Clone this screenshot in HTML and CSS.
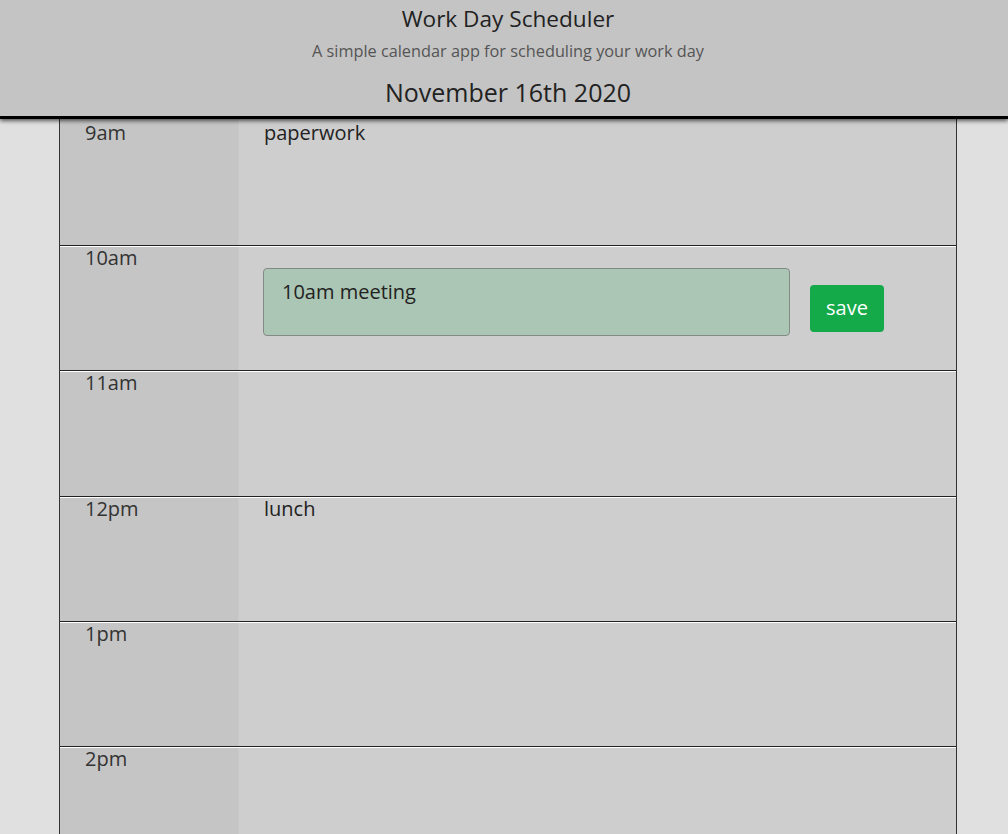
FILE: index.html
```html
<!DOCTYPE html>
<html>
<head>
<meta charset="utf-8">
<link rel="stylesheet" href="styles.css">
</head>
<body>
<header class="jumbotron">
  <div class="jumbo-inner">
    <h1 class="title">Work Day Scheduler</h1>
    <p class="lead">A simple calendar app for scheduling your work day</p>
    <p class="current-day">November 16th 2020</p>
  </div>
</header>
<main class="page">
  <div class="planner">
    <div class="row">
      <div class="hour">9am</div>
      <div class="slot"><textarea class="entry plain">paperwork</textarea></div>
    </div>
    <div class="row">
      <div class="hour">10am</div>
      <div class="slot"><textarea class="entry active">10am meeting</textarea><button class="save-btn">save</button></div>
    </div>
    <div class="row">
      <div class="hour">11am</div>
      <div class="slot"><textarea class="entry plain"></textarea></div>
    </div>
    <div class="row">
      <div class="hour">12pm</div>
      <div class="slot"><textarea class="entry plain">lunch</textarea></div>
    </div>
    <div class="row">
      <div class="hour">1pm</div>
      <div class="slot"><textarea class="entry plain"></textarea></div>
    </div>
    <div class="row">
      <div class="hour">2pm</div>
      <div class="slot"><textarea class="entry plain"></textarea></div>
    </div>
  </div>
</main>
</body>
</html>
```
FILE: styles.css
```css
* { box-sizing: border-box; }
html, body {
  margin: 0;
  padding: 0;
  height: 834px;
  overflow: hidden;
}
body {
  background: #e0e0e0;
  font-family: "Open Sans", "Liberation Sans", sans-serif;
  color: #2b2b2b;
}
.jumbotron {
  position: relative;
  z-index: 2;
  background: #c4c4c4;
  border-bottom: 3px solid #000;
  box-shadow: 0 2px 4px rgba(0,0,0,0.6);
  height: 119px;
}
.jumbo-inner {
  padding-left: 8px;
  text-align: center;
}
.title {
  margin: 0;
  padding-top: 3px;
  font-size: 22.6px;
  font-weight: 400;
  line-height: 32px;
  color: #222;
}
.lead {
  margin: 0;
  padding-top: 4px;
  font-size: 16.3px;
  line-height: 24px;
  font-weight: 400;
  color: #555;
}
.current-day {
  margin: 0;
  padding-top: 12px;
  font-size: 25px;
  line-height: 34px;
  color: #222;
}
.page {
  padding-left: 8px;
}
.planner {
  width: 898px;
  margin: 0 auto;
  border-left: 1px solid #333;
  border-right: 1px solid #333;
}
.row {
  display: flex;
  height: 125.25px;
  border-top: 1px solid #fff;
  border-bottom: 1px solid #222;
}
.row:first-child {
  border-top: none;
  height: 127px;
}
.hour {
  width: 179px;
  flex: none;
  background: #c5c5c5;
  border-right: 1px solid #c9c9c9;
  padding: 0 0 0 25px;
  font-size: 20px;
  line-height: 22px;
  color: #333;
}
.slot {
  flex: 1;
  background: #cecece;
  display: flex;
  align-items: center;
  padding: 0 72px 0 24px;
}
.row:first-child .hour,
.row:first-child .slot {
  padding-top: 3px;
}
.entry {
  font-family: "Open Sans", "Liberation Sans", sans-serif;
  font-size: 20px;
  line-height: 22px;
  color: #222;
  resize: none;
  outline: none;
}
.plain {
  align-self: stretch;
  flex: 1;
  background: transparent;
  border: none;
  padding: 0 0 0 1px;
  margin: 0;
  overflow: hidden;
}
.active {
  align-self: flex-start;
  margin-top: 21px;
  width: 527px;
  height: 68px;
  flex: none;
  background: #abc6b4;
  border: 1px solid #848a86;
  border-radius: 4px;
  padding: 12px 18px;
  overflow: hidden;
}
.save-btn {
  margin-left: 20px;
  width: 74px;
  height: 47px;
  background: #14aa4a;
  color: #fff;
  border: none;
  border-radius: 4px;
  font-family: "Open Sans", "Liberation Sans", sans-serif;
  font-size: 20px;
  line-height: 24px;
  padding: 0 0 2px;
}
```
